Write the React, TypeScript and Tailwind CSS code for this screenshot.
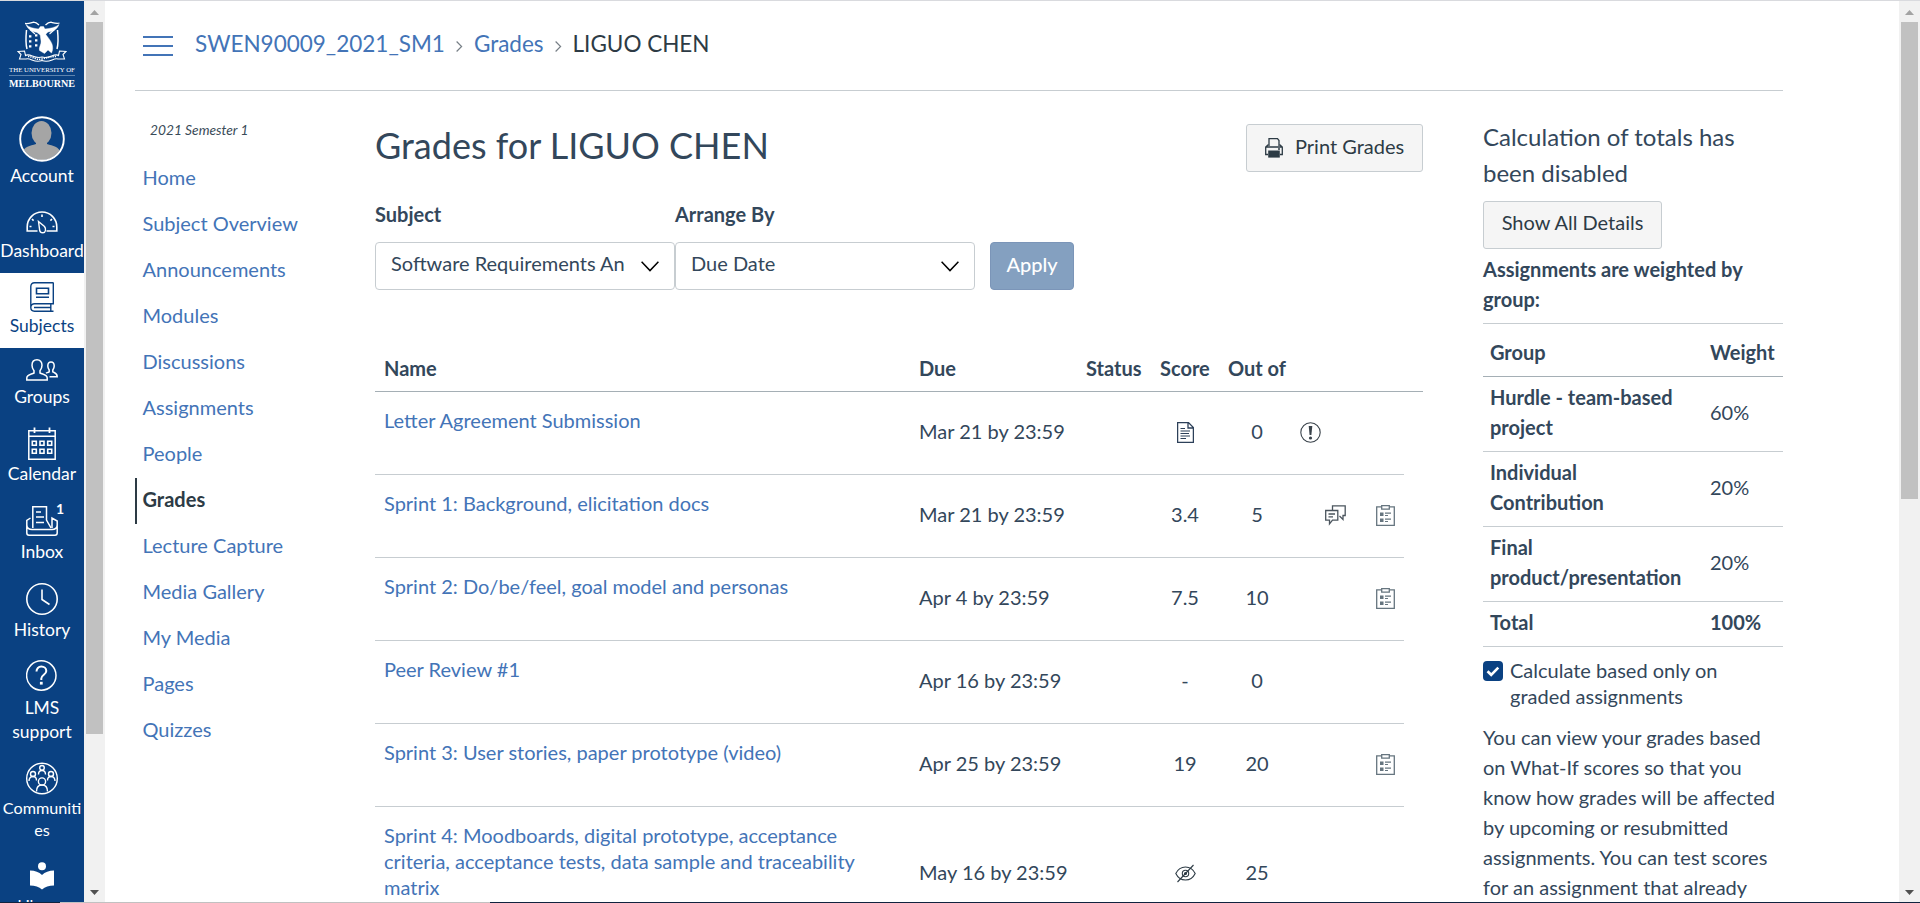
import React from "react";

type IconProps = { className?: string };

function Crest() {
  return (
    <svg width="50" height="42" viewBox="0 0 50 42" className="block" fill="none" stroke="#fff">
      <path d="M9.500 9C8.800 16 8.600 23 10 28M40.500 9C41.200 16 41.400 23 40 28" strokeWidth="1.500" />
      <path d="M8 2.500C11 3 13.500 2 16.500 1.200C19 1.200 20.500 2.500 22 4M42.500 2C39.500 3 37 2 34 1.200C31.500 1.200 30 2.500 28.500 4" strokeWidth="1.300" />
      <path d="M9 3.500C12 6.500 17 7.500 21.500 8L23.500 5.500H26.500L28 8C33 7.500 38.500 6.500 42 3.500C40.500 8 36.500 10.500 31 11L28.500 13.500H22.500L20 11.500C14.500 10.500 10.500 8 9 3.500Z" fill="#fff" strokeWidth="0.400" />
      <path d="M23 13H28.500C30.500 16 33.500 19 35 23C36 26 36 29 34.500 32L31 29L27.500 32.500L22.500 29.500C21.500 26 24.500 23.500 24 20Z" fill="#fff" strokeWidth="0.400" />
      <path d="M13 8.500L18 13M37.500 8.500L32.500 13" strokeWidth="1.100" />
      <path d="M12 15.300h2.400M12 20.300h2.400M12 25.300h2.400M18 14.300h2.400M18 19.300h2.400M18 24.300h2.400" strokeWidth="2.200" />
      <path d="M1 30.500L7.500 30L8.500 34.500C13 31.500 17.500 38.500 25 36C32.500 38.500 37 31.500 41.500 34.500L42.500 30L49 30.500L46 33.500L47.500 38H41C36 36.500 33 42.500 25 39.500C17 42.500 14 36.500 9 38H2.500L4 33.500Z" fill="#0a4182" strokeWidth="1.100" />
      <path d="M11 35.500C16 35.500 19 39.500 25 38S34 35.500 39 35.500" strokeWidth="1.500" strokeDasharray="1.300 1" />
    </svg>
  );
}

function GaugeIcon() {
  return (
    <svg width="32" height="23" viewBox="0 0 32 23" className="block" fill="none" stroke="currentColor" strokeWidth="1.600">
      <path d="M11.500 20H1.200V16C1.200 7.500 7.800 1 16 1S30.800 7.500 30.800 16V20H20.500" />
      <path d="M12.500 10.500L18.500 15.500C20.500 18 19.500 21.800 17 21.800C14.500 21.800 13.500 20 13.500 18Z" strokeWidth="1.400" />
      <path d="M16 3.500V6M6 8l1.600 1.600M26 8l-1.600 1.600M3.500 15.500h2M28.500 15.500h-2" />
    </svg>
  );
}

function BookIcon() {
  return (
    <svg width="24" height="30" viewBox="0 0 24 30" className="block" fill="none" stroke="currentColor" strokeWidth="1.400">
      <path d="M23.300 0.800H4.500C2.200 0.800 0.800 2.200 0.800 4.500V25.500M23.300 0.500V21.800H4.500C2.300 21.800 0.800 23.300 0.800 25.500S2.300 29.200 4.500 29.200H23.500M20.800 22V29M4 25.500H20.500" />
      <path d="M6.500 6.200H18.500V11.800H6.500ZM6 15.200H19" strokeWidth="1.600" />
    </svg>
  );
}

function GroupsIcon() {
  return (
    <svg width="32" height="22" viewBox="0 0 32 22" className="block" fill="none" stroke="currentColor" strokeWidth="1.500">
      <path d="M11 0.800C8 0.800 6 3 6 6.200C6 9 7 10.500 8 11.800V14C5 15.500 0.800 15.500 0.800 19V21H21.200V19C21.200 15.500 17 15.500 14 14V11.800C15 10.500 16 9 16 6.200C16 3 14 0.800 11 0.800Z" />
      <path d="M23.500 17.800H31.200C31.200 14 28.500 14 26.800 12.800V11C27.500 10 28.200 9 28.200 7C28.200 4.500 27 3 25 3S21.800 4.500 21.800 7C21.800 9 22.500 10 23.200 11V12.800C22 13.500 20.800 13.700 20 14.200" />
    </svg>
  );
}

function CalendarIcon() {
  return (
    <svg width="28" height="33" viewBox="0 0 28 33" className="block" fill="none" stroke="currentColor" strokeWidth="1.500">
      <path d="M0.800 3.800H27.200V32.200H0.800ZM0.800 9.200H27.200" />
      <path d="M6.500 0.500V6M21.500 0.500V6" strokeWidth="1.800" />
      <path d="M4.300 14.300h4v4h-4zM12 14.300h4v4h-4zM19.700 14.300h4v4h-4zM4.300 22.300h4v4h-4zM12 22.300h4v4h-4zM19.700 22.300h4v4h-4z" strokeWidth="1.600" />
    </svg>
  );
}

function InboxIcon() {
  return (
    <svg width="32" height="30" viewBox="0 0 32 30" className="block" fill="none" stroke="currentColor" strokeWidth="1.500">
      <path d="M6.800 22V0.800H20.500V14L25 22M10 6H15M10 11H18M10 16.500H18" />
      <path d="M4.500 12L0.800 14.500V27C0.800 28.500 1.500 29.200 3 29.200H29C30.500 29.200 31.200 28.500 31.200 27V17M0.800 19C1 22 3 23.500 6 23.500H26C29 23.500 31 22 31.200 19V15L26 12V22" />
    </svg>
  );
}

function ClockIcon() {
  return (
    <svg width="32" height="32" viewBox="0 0 32 32" className="block" fill="none" stroke="currentColor" strokeWidth="1.600">
      <circle cx="16" cy="16" r="15.200" />
      <path d="M16 6.500V16.500L23.500 21.500" />
    </svg>
  );
}

function HelpIcon() {
  return (
    <svg width="32" height="31" viewBox="0 0 32 31" className="block" fill="none" stroke="currentColor" strokeWidth="1.500">
      <circle cx="15.300" cy="15.500" r="14.700" />
      <path d="M10.500 11.500C10.500 8.500 12.500 6.600 15.300 6.600S20.300 8.500 20.300 11C20.300 14.500 15.300 15 15.300 18.500V20" strokeWidth="2" />
      <path d="M15.300 21.800V24.600" strokeWidth="2.800" />
    </svg>
  );
}

function CommunitiesIcon() {
  return (
    <svg width="32" height="33" viewBox="0 0 32 33" className="block" fill="none" stroke="currentColor" strokeWidth="1.400">
      <circle cx="16" cy="16.500" r="15.300" />
      <circle cx="16" cy="5.800" r="2.300" />
      <path d="M12.500 12.500C12.500 10 13.500 8.500 16 8.500S19.500 10 19.500 12.500" />
      <circle cx="7" cy="12" r="2.500" />
      <path d="M3 19C3 16 4.500 14.500 7 14.500S10.500 16 10.500 18.500" />
      <circle cx="25" cy="12" r="2.500" />
      <path d="M29 19C29 16 27.500 14.500 25 14.500S21.500 16 21.500 18.500" />
      <circle cx="16" cy="19.500" r="3.600" />
      <path d="M10.500 29.500C10.500 25.500 12.500 23 16 23S21.500 25.500 21.500 29.500" />
    </svg>
  );
}

function LibraryIcon() {
  return (
    <svg width="24" height="28" viewBox="0 0 24 28" className="block" fill="currentColor">
      <circle cx="12" cy="4.300" r="4" />
      <path d="M0 8.500C5 8.500 9 10 12 13C15 10 19 8.500 24 8.500V23.500C19 23.500 15 24.800 12 27.500C9 24.800 5 23.500 0 23.500Z" />
    </svg>
  );
}

function Avatar() {
  return (
    <svg width="46" height="46" viewBox="0 0 46 46" className="block">
      <clipPath id="avatarClip"><circle cx="23" cy="23" r="21" /></clipPath>
      <g clipPath="url(#avatarClip)" fill="#a5a5a5">
        <ellipse cx="22.500" cy="17" rx="10" ry="12" />
        <path d="M17 24H28V28C34 30 40 30 42 38V46H3V38C5 30 11 30 17 28Z" />
      </g>
      <circle cx="23" cy="23" r="21.800" fill="none" stroke="#fff" strokeWidth="1.900" />
    </svg>
  );
}

function DocumentIcon() {
  return (
    <svg width="17" height="21" viewBox="0 0 17 21" fill="none" stroke="#2d4059" strokeWidth="1.300">
      <path d="M0.600 0.600H11.500L16.400 5.500V20.400H0.600ZM11 0.600V6H16.400" />
      <path d="M3.500 6.500H8M3.500 9H13M3.500 11.500H12M3.500 14H13M3.500 16.500H9" strokeWidth="1.200" />
    </svg>
  );
}

function WarningIcon() {
  return (
    <svg width="21" height="21" viewBox="0 0 21 21" fill="none" stroke="#3a434b">
      <circle cx="10.500" cy="10.500" r="9.700" strokeWidth="1.100" />
      <path d="M8.700 4H12.300L11.400 13H9.600Z" fill="#3a434b" stroke="none" />
      <circle cx="10.500" cy="16" r="1.600" fill="#3a434b" stroke="none" />
    </svg>
  );
}

function CommentsIcon() {
  return (
    <svg width="21" height="21" viewBox="0 0 21 21" fill="none" stroke="#4b555e" strokeWidth="1.300">
      <path d="M7.500 5V0.800H20.200V10.500H18V14.500L14.500 11" />
      <path d="M0.700 5.500H12.800V15.200H7.500L4.500 19V15.200H0.700ZM3.500 9H10M3.500 11.800H8" />
    </svg>
  );
}

function RubricIcon() {
  return (
    <svg width="19" height="21" viewBox="0 0 19 21" fill="none" stroke="#66757f" strokeWidth="1.300">
      <path d="M5.500 1.800H0.700V20.300H18.300V1.800H13.500" />
      <path d="M5.700 0.700H13.300V4.200H5.700Z" />
      <path d="M4 7.500H7.500V11H4ZM4 13.500H7.500V17H4Z" fill="#66757f" stroke="none" />
      <path d="M9 8.200H15M9 10.500H12M9 14.200H15M9 16.500H12" strokeWidth="1.200" />
    </svg>
  );
}

function HiddenIcon() {
  return (
    <svg width="21" height="19" viewBox="0 0 21 19" fill="none" stroke="#2d3b45" strokeWidth="1.100">
      <path d="M0.800 9.500C3 5 6.500 3 10.500 3S18 5 20.200 9.500C18 14 14.500 16 10.500 16S3 14 0.800 9.500Z" />
      <circle cx="10.500" cy="9.500" r="3.200" />
      <circle cx="10.500" cy="9.500" r="1" />
      <path d="M18.500 1L2.500 18" />
    </svg>
  );
}

function PrinterIcon() {
  return (
    <svg width="18" height="20" viewBox="0 0 18 20" fill="none" stroke="#2d3b45" strokeWidth="1.300">
      <path d="M4 8V0.700H12.500L14 2.500V8" />
      <path d="M3.500 6.500L0.700 9V16.500H3M14.500 6.500L17.300 9V16.500H15M1 9H17" />
      <path d="M3.200 12.500H14.800V19.600H3.200Z" fill="#2d3b45" stroke="none" />
      <path d="M13 11h2" />
    </svg>
  );
}

function Chevron({ className }: IconProps) {
  return (
    <svg width="18" height="11" viewBox="0 0 18 11" fill="none" stroke="#000" strokeWidth="1.500" className={className}>
      <path d="M0.600 0.800L9 9.600L17.400 0.800" />
    </svg>
  );
}

function Crumb() {
  return (
    <svg width="7" height="11" viewBox="0 0 7 11" fill="none" stroke="#777f86" strokeWidth="1.200" className="mt-[5px]">
      <path d="M0.600 0.500L5.600 5.500L0.600 10.500" />
    </svg>
  );
}

function Scrollbar({ thumb }: { thumb: string }) {
  return (
    <div className="flex h-full w-[21px] shrink-0 flex-col items-center bg-[#f1f1f1]">
      <svg width="21" height="21" viewBox="0 0 21 21" className="block shrink-0">
        <path d="M6 14H15L10.500 9Z" fill="#a3a3a3" />
      </svg>
      <div className={"w-[17px] shrink-0 bg-[#c1c1c1] " + thumb} />
      <div className="grow" />
      <svg width="21" height="18" viewBox="0 0 21 18" className="block shrink-0">
        <path d="M6 6H15L10.500 11Z" fill="#505050" />
      </svg>
    </div>
  );
}

const navItems = [
  { lines: ["Dashboard"], icon: <GaugeIcon />, box: "h-[76px] pt-[14px]", text: "mt-[5px] text-[17.500px] leading-6" },
  { lines: ["Subjects"], icon: <BookIcon />, box: "h-[75px] bg-white pt-[9px] text-[#0a4182]", text: "mt-[2px] text-[17.500px] leading-6" },
  { lines: ["Groups"], icon: <GroupsIcon />, box: "h-[71px] pt-[11px]", text: "mt-[4px] text-[17.500px] leading-6" },
  { lines: ["Calendar"], icon: <CalendarIcon />, box: "h-[78px] pt-[8px]", text: "mt-[2px] text-[17.500px] leading-6" },
  { lines: ["Inbox"], icon: <InboxIcon />, box: "h-[78px] pt-[9px]", text: "mt-[4px] text-[17.500px] leading-6", badge: "1" },
  { lines: ["History"], icon: <ClockIcon />, box: "h-[78px] pt-[8px]", text: "mt-[3px] text-[17.500px] leading-6" },
  { lines: ["LMS", "support"], icon: <HelpIcon />, box: "h-[102px] pt-[7px]", text: "mt-[5px] text-[17.500px] leading-6" },
  { lines: ["Communiti", "es"], icon: <CommunitiesIcon />, box: "h-[99px] pt-[7px]", text: "mt-[2px] text-[16.200px] leading-[22px]" },
  { lines: ["Library"], icon: <LibraryIcon />, box: "h-[80px] pt-[8px]", text: "mt-[3px] text-[16.200px] leading-6" },
];

const courseLinks = [
  "Home", "Subject Overview", "Announcements", "Modules", "Discussions", "Assignments", "People",
  "Grades", "Lecture Capture", "Media Gallery", "My Media", "Pages", "Quizzes",
];

type Row = { name: string; due: string; score: React.ReactNode; outOf: string; warn?: boolean; comments?: boolean; rubric?: boolean };

const rows: Row[] = [
  { name: "Letter Agreement Submission", due: "Mar 21 by 23:59", score: <DocumentIcon />, outOf: "0", warn: true },
  { name: "Sprint 1: Background, elicitation docs", due: "Mar 21 by 23:59", score: "3.4", outOf: "5", comments: true, rubric: true },
  { name: "Sprint 2: Do/be/feel, goal model and personas", due: "Apr 4 by 23:59", score: "7.5", outOf: "10", rubric: true },
  { name: "Peer Review #1", due: "Apr 16 by 23:59", score: "-", outOf: "0" },
  { name: "Sprint 3: User stories, paper prototype (video)", due: "Apr 25 by 23:59", score: "19", outOf: "20", rubric: true },
  { name: "Sprint 4: Moodboards, digital prototype, acceptance criteria, acceptance tests, data sample and traceability matrix", due: "May 16 by 23:59", score: <HiddenIcon />, outOf: "25" },
];

const weights = [
  { group: "Hurdle - team-based project", weight: "60%" },
  { group: "Individual Contribution", weight: "20%" },
  { group: "Final product/presentation", weight: "20%" },
];

function SideNav() {
  return (
    <nav className="flex h-full w-[84px] shrink-0 flex-col overflow-hidden bg-[#0a4182] text-white">
      <div className="flex h-[106px] shrink-0 flex-col items-center pt-[20px]">
        <Crest />
        <div className="mt-[3px] font-['Liberation_Serif',serif] text-[6.800px] leading-[8px] whitespace-nowrap">THE UNIVERSITY OF</div>
        <div className="mt-px h-px w-[66px] bg-[#5d83ae]" />
        <div className="mt-[2px] font-['Liberation_Serif',serif] text-[10.100px] leading-[12px] font-bold">MELBOURNE</div>
      </div>
      <div className="flex h-[90px] shrink-0 flex-col items-center pt-[9px]">
        <Avatar />
        <div className="mt-[2px] text-[17.500px] leading-6">Account</div>
      </div>
      {navItems.map((n) => (
        <div key={n.lines[0]} className={"relative flex shrink-0 flex-col items-center " + n.box}>
          {n.icon}
          {n.badge && <span className="absolute top-[2px] left-[56px] text-[14px] leading-5 font-bold">{n.badge}</span>}
          <div className={"text-center whitespace-nowrap " + n.text}>
            {n.lines.map((line) => (
              <div key={line}>{line}</div>
            ))}
          </div>
        </div>
      ))}
    </nav>
  );
}

function CourseMenu() {
  return (
    <aside className="w-[240px] shrink-0">
      <div className="mt-[27px] pl-[15px] text-[13.750px] leading-6 text-[#394b58] italic">2021 Semester 1</div>
      <ul className="mt-[14px]">
        {courseLinks.map((l) => (
          <li
            key={l}
            className={
              l === "Grades"
                ? "flex h-[46px] items-center border-l-2 border-[#2d3b45] pb-[4px] pl-[5.500px] font-bold text-[#2d3b45]"
                : "flex h-[46px] items-center pb-[4px] pl-[7.500px] text-[#4374b7]"
            }
          >
            {l}
          </li>
        ))}
      </ul>
    </aside>
  );
}

function Select({ label, value }: { label: string; value: string }) {
  return (
    <div className="w-[300px]">
      <div className="leading-[30px] font-bold">{label}</div>
      <div className="mt-[13px] flex h-[48px] items-center justify-between rounded-[4px] border border-[#c7cdd1] pr-[15px] pl-[15px]">
        <span className="w-[234px] overflow-hidden pb-[6px] whitespace-nowrap">{value}</span>
        <Chevron />
      </div>
    </div>
  );
}

function GradesTable() {
  return (
    <div className="mt-[55px]">
      <div className="flex h-[47px] items-center border-b border-[#a5afb5] pl-[9px] font-bold whitespace-nowrap">
        <span className="w-[535px]">Name</span>
        <span className="w-[167px]">Due</span>
        <span className="w-[74px]">Status</span>
        <span className="w-[68px]">Score</span>
        <span>Out of</span>
      </div>
      {rows.map((r) => (
        <div key={r.name} className="flex min-h-[83px] w-[1029px] border-b border-[#c7cdd1] pl-[9px]">
          <div className="w-[535px] pt-[15px] pr-[50px] pb-[41px] leading-[26px] text-[#4374b7]">{r.name}</div>
          <div className="flex items-center pb-[4px]">
            <div className="w-[225px]">{r.due}</div>
            <div className={typeof r.score === "string" ? "flex w-[82px] justify-center" : "flex w-[82px] justify-center pt-[3px]"}>{r.score}</div>
            <div className="w-[62px] text-center">{r.outOf}</div>
            <div className="flex w-[37px] justify-end pt-[3px] pr-[4px]">{r.warn && <WarningIcon />}</div>
            <div className="w-[51px] pt-[2px]">{r.comments && <CommentsIcon />}</div>
            <div className="w-[19px] pt-[3px]">{r.rubric && <RubricIcon />}</div>
          </div>
        </div>
      ))}
    </div>
  );
}

function Summary() {
  return (
    <aside className="w-[300px] shrink-0 pt-[28px] leading-[30px]">
      <h2 className="text-[24px] leading-[36px]">Calculation of totals has been disabled</h2>
      <button className="mt-[10px] block h-[48px] w-[179px] rounded-[3px] border border-[#c7cdd1] bg-[#f5f5f5] pb-[6px] text-[#2d3b45]">
        Show All Details
      </button>
      <div className="mt-[5px] font-bold">Assignments are weighted by group:</div>
      <div className="mt-[9px] flex h-[54px] items-center border-y border-t-[#c7cdd1] border-b-[#a5afb5] pt-[4px] pl-[7px] font-bold">
        <span className="w-[220px]">Group</span>
        <span>Weight</span>
      </div>
      {weights.map((w) => (
        <div key={w.group} className="flex h-[75px] items-center border-b border-[#c7cdd1] pb-[4px] pl-[7px]">
          <div className="w-[220px] pr-[20px] font-bold">{w.group}</div>
          <div>{w.weight}</div>
        </div>
      ))}
      <div className="flex h-[45px] items-center border-b border-[#c7cdd1] pb-[4px] pl-[7px] font-bold">
        <span className="w-[220px]">Total</span>
        <span>100%</span>
      </div>
      <div className="mt-[10px] flex leading-[26px]">
        <div className="mt-[4px] flex h-[20px] w-[20px] shrink-0 items-center justify-center rounded-[4px] bg-[#0a4182]">
          <svg width="14" height="11" viewBox="0 0 14 11" fill="none" stroke="#fff" strokeWidth="2.600">
            <path d="M1.500 5.200L5.200 8.800L12.300 1.600" />
          </svg>
        </div>
        <div className="ml-[7px] w-[240px]">Calculate based only on graded assignments</div>
      </div>
      <p className="mt-[13px]">
        You can view your grades based on What-If scores so that you know how grades will be affected by upcoming or
        resubmitted assignments. You can test scores for an assignment that already
      </p>
    </aside>
  );
}

export default function App() {
  return (
    <div className="flex h-[903px] w-[1920px] flex-col overflow-hidden bg-white font-['Lato',sans-serif] text-[20px] leading-[30px] text-[#33475b]">
      <div className="h-px shrink-0 bg-[#d9dade]" />
      <div className="flex h-[901px] shrink-0 overflow-hidden">
        <SideNav />
        <Scrollbar thumb="h-[712px]" />
        <main className="h-full grow overflow-hidden pl-[30px]">
          <header className="flex h-[90px] w-[1648px] items-center border-b border-[#c7cdd1] pb-[3px] pl-[8px] text-[22.500px]">
            <svg width="30" height="20" viewBox="0 0 30 20" className="mt-[4px] mr-[22px]" stroke="#4374b7" strokeWidth="2">
              <path d="M0 1H30M0 10H30M0 19H30" />
            </svg>
            <span className="text-[#4374b7]">SWEN90009_2021_SM1</span>
            <span className="flex w-[29px] justify-center"><Crumb /></span>
            <span className="text-[#4374b7]">Grades</span>
            <span className="flex w-[29px] justify-center"><Crumb /></span>
            <span className="text-[#2d3b45]">LIGUO CHEN</span>
          </header>
          <div className="flex">
            <CourseMenu />
            <section className="w-[1048px] shrink-0">
              <div className="flex items-start justify-between pt-[33px]">
                <h1 className="-mt-px text-[36px] leading-[44px]">Grades for LIGUO CHEN</h1>
                <button className="flex h-[48px] w-[177px] items-center rounded-[3px] border border-[#c7cdd1] bg-[#f5f5f5] pl-[18px] whitespace-nowrap text-[#2d3b45]">
                  <PrinterIcon />
                  <span className="ml-[12px] pb-[4px]">Print Grades</span>
                </button>
              </div>
              <div className="mt-[27px] flex items-end">
                <Select label="Subject" value="Software Requirements An" />
                <Select label="Arrange By" value="Due Date" />
                <button className="ml-[15px] h-[48px] w-[84px] rounded-[4px] border border-[#7b95b8] bg-[#84a0c0] pb-[5px] font-medium text-white">
                  Apply
                </button>
              </div>
              <GradesTable />
            </section>
            <div className="w-[60px] shrink-0" />
            <Summary />
          </div>
        </main>
        <Scrollbar thumb="h-[477px]" />
      </div>
      <div className="flex h-px shrink-0">
        <div className="w-[60px] bg-[#10233f]" />
        <div className="w-[430px] bg-[#c1c1c1]" />
        <div className="grow bg-[#10233f]" />
      </div>
    </div>
  );
}
